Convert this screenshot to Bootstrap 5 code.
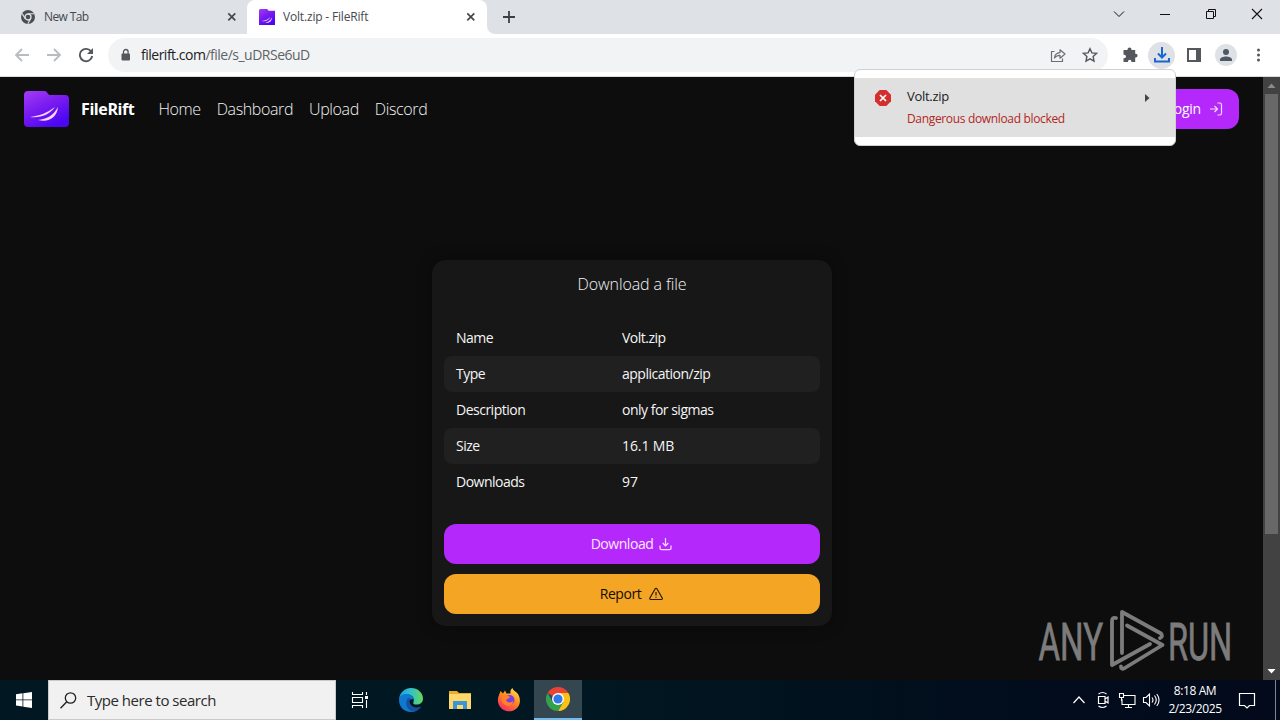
<!DOCTYPE html>
<html lang="en">
<head>
  <meta charset="UTF-8" />
  <title>Volt.zip - FileRift</title>
  <meta name="viewport" content="width=device-width, initial-scale=1" />
  <link rel="stylesheet" href="https://cdn.jsdelivr.net/npm/bootstrap@5.3.0/dist/css/bootstrap.min.css" />
  <style>
    body {
      width: 1280px;
      height: 720px;
      overflow: hidden;
      font-family: "Open Sans", "Noto Sans", sans-serif;
      font-size: 14px;
      line-height: 20px;
      background: #0d0d0d;
    }
    svg { display: block; flex: none; }

    /* Browser chrome */
    .tabstrip { height: 34px; background: #dee1e6; }
    .tab-item { height: 34px; font-size: 12px; color: #45494d; }
    .tab-idle { width: 247px; padding: 0 9px 0 21px; letter-spacing: -.6px; }
    .tab-active { width: 240px; padding: 0 10px 0 12px; background: #fff; border-radius: 8px 8px 0 0; letter-spacing: -.18px; }
    .tab-label { margin-left: 9px; }
    .window-btns { gap: 34px; padding-right: 17px; height: 28px; }
    .toolbar { height: 43px; background: #fff; border-bottom: 1px solid #d9dbde; padding: 4px 0 4px 14px; }
    .omnibox { width: 1000px; height: 34px; border-radius: 17px; background: #f1f3f4; padding: 0 10px 0 11px; margin-left: 14px; }
    .url-text { font-size: 14px; color: #5f6368; margin-left: 8px; letter-spacing: -.5px; }
    .url-text b { font-weight: 400; color: #202124; }
    .puzzle { margin-left: 14px; }
    .round-btn { width: 27px; height: 27px; border-radius: 50%; background: #dfe1e5; margin: 0 5px 0 10px; }
    .avatar-btn { width: 22px; height: 22px; border-radius: 50%; background: #dee1e6; margin: 0 8px 0 7px; }

    /* Download bubble hangs over the page */
    .bubble {
      position: absolute; left: 854px; top: 69px; width: 322px; height: 77px;
      background: #fff; border: 1px solid #d0d0d0; border-radius: 6px; padding: 8px 0;
      z-index: 5; overflow: hidden;
    }
    .bubble-row { height: 59px; background: #e0e0e0; padding: 8px 25px 0 20px; }
    .bubble-name { font-size: 13px; color: #202124; line-height: 20px; letter-spacing: -.3px; }
    .bubble-warn { font-size: 12px; color: #b3261e; line-height: 25px; letter-spacing: -.34px; }

    /* Site */
    .viewport-area { height: 603px; background: #0d0d0d; }
    .site { width: 1263px; }
    .site-nav { height: 64px; padding: 0 24px; color: #ececec; font-size: 16px; }
    .site-nav a { color: #f2f2f2; text-decoration: none; font-weight: 300; }
    .site-links { gap: 16px; letter-spacing: -.38px; }
    .site-nav .brand-name { font-weight: 700; margin: 0 24px 0 12px; color: #fff; letter-spacing: -.4px; }
    .site-nav .login-btn { width: 100px; height: 40px; border-radius: 12px; background: #b528fc; color: #fff; font-size: 14px; font-weight: 400; letter-spacing: -.2px; }
    .file-card { width: 400px; height: 366px; margin: 119px 0 0 432px; padding: 12px; background: #171717; border-radius: 14px; color: #fff; box-shadow: 0 0 15px rgba(0,0,0,.35); }
    .file-title { height: 24px; line-height: 24px; font-size: 16px; font-weight: 300; text-align: center; margin-bottom: 24px; color: #f4f4f4; letter-spacing: -.1px; }
    .file-row { height: 36px; line-height: 36px; padding: 0 12px; border-radius: 8px; color: #f5f5f5; letter-spacing: -.5px; }
    .file-row:nth-child(even) { background: #202020; }
    .file-row span:first-child { width: 166px; }
    .file-row .loose { letter-spacing: -.1px; }
    .wide-btn { height: 40px; border-radius: 12px; font-size: 14px; letter-spacing: -.45px; }
    .wide-btn.purple { background: #b528fc; color: #fbeaff; margin-top: 24px; }
    .wide-btn.orange { background: #f5a524; color: #140c00; margin-top: 10px; }
    .btn-glyph { margin: 0 1px 0 6px; }
    .scroll-track { width: 17px; background: #424242; }
    .scroll-thumb { width: 13px; height: 440px; background: #686868; }
    .watermark { position: absolute; left: 1034px; top: 606px; z-index: 3; }

    /* Taskbar */
    .taskbar { height: 40px; background: linear-gradient(90deg, #011721 0, #011721 600px, #020c1c 1050px, #020a1b 100%); color: #fff; }
    .task-cell { width: 48px; height: 40px; }
    .apps { margin-left: 3px; gap: 1px; }
    .search-box { width: 288px; background: #f1f1f1; border: 1px solid #c9c9c9; color: #2b2b2b; font-size: 15px; padding-left: 11px; letter-spacing: -.48px; }
    .search-hint { margin-left: 10px; }
    .task-open { background: #34464f; border-bottom: 2px solid #76b9ed; }
    .clock { width: 64px; font-size: 12px; line-height: 18px; text-align: center; letter-spacing: -.4px; margin: 0 4px 0 3px; }
    .tray-gap { margin-left: 5px; }
    .notice { margin: 0 19px 0 7px; }
  </style>
</head>
<body>
  <svg width="0" height="0" class="position-absolute">
    <defs>
      <linearGradient id="folder" x1="0" y1="0" x2=".6" y2="1">
        <stop offset="0" stop-color="#a33cf5" /><stop offset=".5" stop-color="#7a1cf0" /><stop offset="1" stop-color="#4b06f2" />
      </linearGradient>
      <symbol id="rift" viewBox="0 0 45 36">
        <path d="M4 0h17c2 0 3 4 5 4h15a4 4 0 0 1 4 4v24a4 4 0 0 1-4 4H4a4 4 0 0 1-4-4V4a4 4 0 0 1 4-4z" fill="url(#folder)" />
        <path d="M6 26c9-1 17-4 25-10-6 8-14 11-25 10z" fill="#fbd9ff" />
        <path d="M14 29c9-1 15-4 20-13-1 10-9 16-20 13z" fill="#fbd9ff" />
      </symbol>
    </defs>
  </svg>

  <!-- Tab strip -->
  <div class="tabstrip d-flex">
    <div class="tab-item tab-idle d-flex align-items-center">
      <svg width="14" height="14" viewBox="0 0 14 14"><circle cx="7" cy="7" r="7" fill="#4b4f55" /><circle cx="7" cy="7" r="3" fill="#4b4f55" stroke="#dee1e6" stroke-width="1.3" /><path d="M7 3.8h6M4.2 8.6 1.2 3.6M9.7 8.6 6.8 13.7" stroke="#dee1e6" stroke-width="1.1" /></svg>
      <span class="tab-label me-auto">New Tab</span>
      <svg width="12" height="12" viewBox="0 0 12 12"><path d="m2.3 2.3 7 7m0-7-7 7" stroke="#45494d" stroke-width="1.7" /></svg>
    </div>
    <div class="tab-item tab-active d-flex align-items-center">
      <svg width="16" height="16" viewBox="0 0 45 45"><path d="M3 0h20l4 5h18v40H0V3z" fill="url(#folder)" /><path d="M8 34c10-1 18-5 24-12-4 10-13 14-24 12zm9 4c9-1 15-5 20-15-1 12-9 18-20 15z" fill="#fbd9ff" /></svg>
      <span class="ms-2 me-auto">Volt.zip - FileRift</span>
      <svg width="12" height="12" viewBox="0 0 12 12"><path d="m2.3 2.3 7 7m0-7-7 7" stroke="#45494d" stroke-width="1.7" /></svg>
    </div>
    <svg class="align-self-end" width="8" height="8"><path d="M0 0v8h8A8 8 0 0 1 0 0z" fill="#fff" /></svg>
    <svg width="28" height="34" viewBox="0 0 28 34"><path d="M14 11v12M8 17h12" stroke="#3c4043" stroke-width="1.8" /></svg>
    <div class="window-btns d-flex align-items-center ms-auto">
      <svg width="12" height="12" viewBox="0 0 12 12"><path d="m1 3.5 5 5 5-5" fill="none" stroke="#111" /></svg>
      <svg width="12" height="12" viewBox="0 0 12 12"><path d="M1 6.5h10" stroke="#111" /></svg>
      <svg width="12" height="12" viewBox="0 0 12 12"><path d="M1.5 3.5h7v7h-7zM3.5 3V1.5h7v7H9" fill="none" stroke="#111" /></svg>
      <svg width="12" height="12" viewBox="0 0 12 12"><path d="m1 1 10 10M11 1 1 11" stroke="#111" stroke-width="1.1" /></svg>
    </div>
  </div>

  <!-- Toolbar -->
  <div class="toolbar d-flex align-items-center">
    <svg width="16" height="16" viewBox="0 0 16 16"><path d="M15 8H2m6-6L2 8l6 6" fill="none" stroke="#b9bcbf" stroke-width="1.8" /></svg>
    <svg class="ms-3" width="16" height="16" viewBox="0 0 16 16"><path d="M1 8h13M8 2l6 6-6 6" fill="none" stroke="#b9bcbf" stroke-width="1.8" /></svg>
    <svg class="ms-3" width="16" height="16" viewBox="0 0 16 16"><path d="M13.3 4.7A6.2 6.2 0 1 0 14.2 9" fill="none" stroke="#54585c" stroke-width="1.9" /><path d="M15 1v6H9z" fill="#54585c" /></svg>
    <div class="omnibox d-flex align-items-center">
      <svg width="14" height="14" viewBox="0 0 14 14"><rect x="2.5" y="5.5" width="8.5" height="7" rx="1" fill="#54585c" /><path d="M4.5 6V3.8a2.300 2.300 0 0 1 4.600 0V6" fill="none" stroke="#54585c" stroke-width="1.3" /></svg>
      <span class="url-text me-auto"><b>filerift.com</b>/file/s_uDRSe6uD</span>
      <svg class="me-3" width="16" height="16" viewBox="0 0 16 16"><path d="M4.500 4.500H1.500v10h11v-3M4.500 11c.3-3.500 2-5.200 5.500-5.400V2.800L15 7l-5 4.200V8.400c-2.500 0-4.200.8-5.500 2.600z" fill="none" stroke="#6a6e72" stroke-width="1.2" stroke-linejoin="round" /></svg>
      <svg width="16" height="16" viewBox="0 0 16 16"><path d="m8 1.700 1.900 4.200 4.600.5-3.400 3.100.9 4.600-4-2.300-4 2.300.9-4.600L1.500 6.400l4.600-.5z" fill="none" stroke="#54585c" stroke-width="1.4" /></svg>
    </div>
    <svg class="puzzle" width="16" height="16" viewBox="0 0 16 16"><path d="M5.500 3V2.500a2 2 0 0 1 4 0V3h3.700v3.700h.5a1.900 1.900 0 0 1 0 3.800h-.5V15H9.400v-.6a1.700 1.700 0 0 0-3.400 0v.6H1.500v-3.800h.8a1.700 1.700 0 0 0 0-3.400h-.8V3z" fill="#54585c" /></svg>
    <div class="round-btn d-flex align-items-center justify-content-center">
      <svg width="18" height="18" viewBox="0 0 18 18"><path d="M9 1v10M5 7.500l4 4 4-4M2 12v3.500h14V12" fill="none" stroke="#1967d2" stroke-width="2" /></svg>
    </div>
    <svg class="mx-1" width="20" height="16" viewBox="0 0 20 16"><path d="M4 2h12v12H4z" fill="none" stroke="#54585c" stroke-width="2" /><path d="M12 2h4v12h-4z" fill="#54585c" /></svg>
    <div class="avatar-btn d-flex align-items-center justify-content-center">
      <svg width="14" height="14" viewBox="0 0 14 14"><circle cx="7" cy="4" r="3" fill="#4f5664" /><path d="M1 13v-1.500C1 9.500 4.500 8.500 7 8.500s6 1 6 3V13z" fill="#4f5664" /></svg>
    </div>
    <svg class="ms-1 me-auto" width="20" height="16" viewBox="0 0 20 16"><g fill="#54585c"><circle cx="9.5" cy="3" r="1.5" /><circle cx="9.5" cy="8" r="1.5" /><circle cx="9.5" cy="13" r="1.5" /></g></svg>
  </div>

  <div class="bubble">
    <div class="bubble-row d-flex">
      <svg class="mt-1" width="16" height="16" viewBox="0 0 16 16"><path d="M4.700 0h6.600L16 4.700v6.600L11.300 16H4.700L0 11.300V4.700z" fill="#d32f2f" /><path d="m5 5 6 6m0-6-6 6" stroke="#fff" stroke-width="1.7" /></svg>
      <div class="ms-3 me-auto">
        <div class="bubble-name">Volt.zip</div>
        <div class="bubble-warn">Dangerous download blocked</div>
      </div>
      <svg class="mt-2" width="6" height="8" viewBox="0 0 6 8"><path d="M1 0v8l4.500-4z" fill="#444" /></svg>
    </div>
  </div>

  <!-- Page -->
  <div class="viewport-area d-flex">
    <main class="site">
      <nav class="site-nav d-flex align-items-center">
        <svg width="45" height="36"><use href="#rift" /></svg>
        <span class="brand-name">FileRift</span>
        <div class="site-links d-flex">
          <a href="#">Home</a>
          <a href="#">Dashboard</a>
          <a href="#">Upload</a>
          <a href="#">Discord</a>
        </div>
        <a href="#" class="login-btn d-flex align-items-center justify-content-end ms-auto pe-3">Login
          <svg class="ms-2" width="14" height="14" viewBox="0 0 14 14"><path d="M1 7h7.500M5.500 4l3 3-3 3M8.500 1h2.300c1 0 1.700.7 1.700 1.700v8.600c0 1-.7 1.700-1.700 1.700H8.500" fill="none" stroke="#f6dcff" stroke-width="1.2" /></svg>
        </a>
      </nav>
      <section class="file-card">
        <header class="file-title">Download a file</header>
        <article>
          <div class="file-row d-flex"><span>Name</span><span>Volt.zip</span></div>
          <div class="file-row d-flex"><span>Type</span><span>application/zip</span></div>
          <div class="file-row d-flex"><span>Description</span><span>only for sigmas</span></div>
          <div class="file-row d-flex"><span>Size</span><span class="loose">16.1 MB</span></div>
          <div class="file-row d-flex"><span>Downloads</span><span class="loose">97</span></div>
        </article>
        <div class="wide-btn purple d-flex align-items-center justify-content-center">Download
          <svg class="btn-glyph" width="13" height="14" viewBox="0.5 0 13 14"><path d="M7 1v7.500M4.200 6 7 8.800 9.800 6M1.500 8.500v2.800c0 .8.600 1.400 1.400 1.400h8.200c.8 0 1.400-.6 1.400-1.400V8.500" fill="none" stroke="#fbdcff" stroke-width="1.2" /></svg>
        </div>
        <div class="wide-btn orange d-flex align-items-center justify-content-center">Report
          <svg class="btn-glyph ms-2" width="14" height="14" viewBox="0 0 14 14"><path d="M6.200 1.800a1 1 0 0 1 1.700 0l5.300 9.200c.4.700 0 1.500-.8 1.500H1.700c-.8 0-1.200-.8-.8-1.500zM7 5v3.500M7 9.700v1.100" fill="none" stroke="#2a1a00" stroke-width="1.2" /></svg>
        </div>
      </section>
    </main>
    <div class="scroll-track d-flex flex-column align-items-center">
      <svg width="17" height="17"><path d="M4.500 11h8l-4-4.500z" fill="#8a8a8a" /></svg>
      <div class="scroll-thumb"></div>
      <svg class="mt-auto" width="17" height="17"><path d="M4.500 6h8l-4 4.500z" fill="#fff" /></svg>
    </div>
  </div>

  <svg class="watermark" width="210" height="70" viewBox="1034 606 210 70">
    <g fill="#7c7c7c" stroke="#7c7c7c" stroke-width=".8" font-family="Roboto, sans-serif" font-size="52">
      <text transform="translate(1038.5 659.5) scale(.635 1)">ANY</text>
      <text transform="translate(1168 659.5) scale(.625 1)">RUN</text>
    </g>
    <g fill="none" stroke="#7c7c7c" stroke-width="3.8" stroke-linejoin="round" stroke-linecap="round">
      <path d="M1122 653V612l39 21.500q2.500 3-1 4.500" />
      <path d="M1127 625.500l35.500 19.500-38.500 23.500q-3 1-3-2" />
      <path d="M1116 618q-4-1-4 3v44l38-21" />
    </g>
  </svg>

  <!-- Taskbar -->
  <footer class="taskbar d-flex">
    <div class="task-cell d-flex align-items-center justify-content-center">
      <svg width="16" height="16" viewBox="0 0 16 16"><path d="m0 2.200 6.500-.9v6.200H0zM7.300 1.200 16 0v7.500H7.300zM0 8.300h6.500v6.200L0 13.600zM7.300 8.300H16V16l-8.700-1.200z" fill="#fff" /></svg>
    </div>
    <div class="search-box d-flex align-items-center">
      <svg width="17" height="17" viewBox="0 0 17 17"><circle cx="10.5" cy="6" r="5.2" fill="none" stroke="#222" stroke-width="1.3" /><path d="m6.800 9.800-6.300 6.500" stroke="#222" stroke-width="1.4" /></svg>
      <span class="search-hint">Type here to search</span>
    </div>
    <div class="task-cell d-flex align-items-center justify-content-center">
      <svg width="18" height="16" viewBox="0 0 18 16"><path d="M1.500 0v2.500h10V0M1.500 16v-2.500h10V16M1.500 5.500h10v5h-10zM15.500 0v3M15.500 8v8" fill="none" stroke="#fff" stroke-width="1.1" /><path d="M14 4h3v3h-3z" fill="#fff" /></svg>
    </div>
    <div class="apps d-flex">
      <div class="task-cell d-flex align-items-center justify-content-center">
        <svg width="24" height="24" viewBox="0 0 24 24">
          <defs><linearGradient id="edgeTop"><stop offset="0" stop-color="#1b9de2" /><stop offset=".5" stop-color="#35c1c9" /><stop offset="1" stop-color="#65d957" /></linearGradient></defs>
          <path d="M0 11C1 4 6 0 12 0c7 0 12 5 12 10.500 0 4-3 6-6.500 6-3 0-4-1.200-3-2.600C16 9 12 6.500 8 6.500c-4 0-7 2-8 4.500z" fill="url(#edgeTop)" />
          <path d="M0 12c0-4 4-6 7.500-6 4 0 7 2.500 7 5.500-5-2-7 5-1 8 3 1.500 6 .5 8.500-1C20 22 16 24 12 24 5 24 0 19 0 12z" fill="#0f78cf" />
          <path d="M9 10c-4 5-1 12 5 13.800 3-.5 6-2.500 8-5.300-5 2.800-12-.5-11.500-6 0-1.300.7-2.100 1.500-2.500z" fill="#12529f" />
        </svg>
      </div>
      <div class="task-cell d-flex align-items-center justify-content-center">
        <svg width="22" height="18" viewBox="0 0 22 18"><path d="M0 0h8l2 2h12v16H0z" fill="#f0a92a" /><path d="M0 3h22v15H0z" fill="#ffd869" /><path d="M4 10h14v8h-4v-4H8v4H4z" fill="#3b95d8" /></svg>
      </div>
      <div class="task-cell d-flex align-items-center justify-content-center">
        <svg width="24" height="24" viewBox="0 0 24 24">
          <defs><linearGradient id="fox" x1=".8" y1="0" x2=".2" y2="1"><stop offset="0" stop-color="#ffe24a" /><stop offset=".45" stop-color="#ff8a1e" /><stop offset="1" stop-color="#f4246b" /></linearGradient></defs>
          <path d="M3.500 3 6 5.500l2-3 1.500 3h4C13 3 14 1 15.500 0c.5 3 4 3.500 5.500 6 3 5 2.500 11-1.500 14.500-4.500 4-11 3.500-15 0C.5 17 0 11 2 7z" fill="url(#fox)" />
          <circle cx="12.5" cy="12" r="5" fill="#7b3de8" /><path d="M5 8c3-2 6-.5 8 1-1 2-3 1.500-4 3 1 3 5 3 7.500 1C16 18 10 19 7 16c-2-2-3-5-2-8z" fill="#ff8128" />
        </svg>
      </div>
      <div class="task-cell task-open d-flex align-items-center justify-content-center">
        <svg width="24" height="24" viewBox="0 0 24 24"><path d="M12 12 1.600 6A12 12 0 0 1 22.400 6z" fill="#ea4335" /><path d="M12 6h10.400A12 12 0 0 1 12 24l5.200-9z" fill="#fbc116" /><path d="M1.600 6A12 12 0 0 0 12 24l5.200-9H6.800z" fill="#34a04b" /><circle cx="12" cy="12" r="6" fill="#fff" /><circle cx="12" cy="12" r="4.6" fill="#2f79e8" /></svg>
      </div>
    </div>
    <div class="d-flex align-items-center ms-auto">
      <svg width="14" height="14" viewBox="0 0 14 14"><path d="m1.500 10 5.500-6 5.500 6" fill="none" stroke="#fff" stroke-width="1.2" /></svg>
      <svg class="ms-2" width="18" height="18" viewBox="0 0 18 18"><path d="M4.500 5.500h6.500v7H4.500zM11 8l3-2v6l-3-2M4.500 3q4-3 8 0M4.500 15q4 3 8 0" fill="none" stroke="#fff" stroke-width="1.2" /></svg>
      <svg class="tray-gap" width="20" height="18" viewBox="0 0 20 18"><path d="M6 4.500h12v9H5V8M11.500 14v3M8 16.500h7M2.500 2.500h4v4h-4zM4.500 7v3" fill="none" stroke="#fff" stroke-width="1.1" /></svg>
      <svg class="tray-gap" width="18" height="18" viewBox="0 0 18 18"><path d="M1.500 6.500H4L7.500 3v12L4 11.500H1.500zM10 6.500q2 2.500 0 5M12.500 4.500q3.500 4.500 0 9M14.800 3q4.500 6 0 12" fill="none" stroke="#fff" stroke-width="1.1" /></svg>
      <div class="clock"><div>8:18 AM</div><div>2/23/2025</div></div>
      <svg class="notice" width="18" height="18" viewBox="0 0 18 18"><path d="M1.500 2.500h15v12h-5L9 17l-2.500-2.500h-5z" fill="none" stroke="#fff" stroke-width="1.2" /></svg>
      <div class="vr opacity-50 me-1"></div>
    </div>
  </footer>
  <script src="https://cdn.jsdelivr.net/npm/bootstrap@5.3.0/dist/js/bootstrap.bundle.min.js"></script>
</body>
</html>
